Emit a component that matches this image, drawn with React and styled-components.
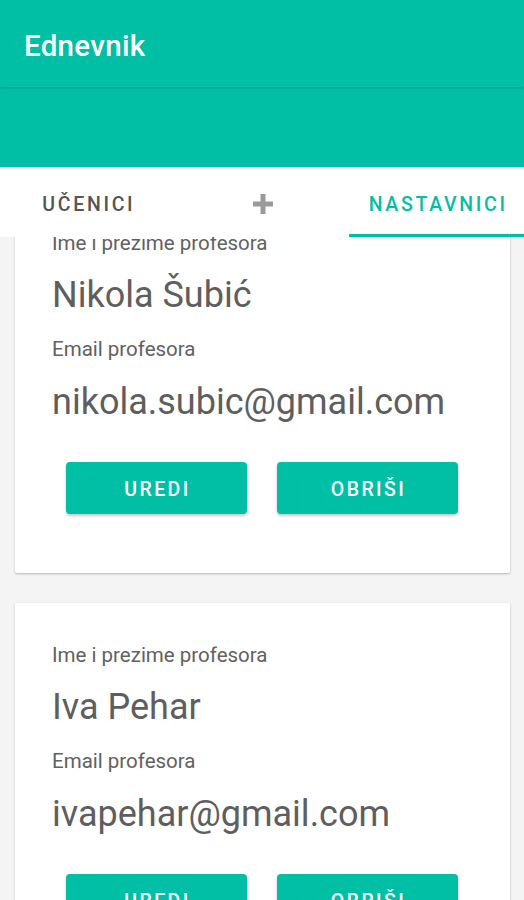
import React from "react";
import styled, { createGlobalStyle } from "styled-components";

const GlobalStyle = createGlobalStyle`
  html, body {
    margin: 0;
    padding: 0;
    background: #f4f4f4;
    font-family: Roboto, "Noto Sans", sans-serif;
  }
  * { box-sizing: border-box; }
`;

const TEAL = "#00bfa5";

const Screen = styled.div`
  width: 524px;
  height: 900px;
  overflow: hidden;
  display: flex;
  flex-direction: column;
  background: #f4f4f4;
`;

const AppBar = styled.header`
  flex: none;
  background: ${TEAL};
  display: flex;
  flex-direction: column;
  position: relative;
  z-index: 2;
`;

const Toolbar = styled.div`
  height: 87px;
  display: flex;
  align-items: center;
  padding: 0 0 0 24px;
  box-shadow: 0 1px 2px rgba(0, 0, 0, 0.22);
  position: relative;
  z-index: 1;
`;

const Title = styled.h1`
  margin: 0;
  color: #ffffff;
  font-size: 29.5px;
  font-weight: 500;
  letter-spacing: 0.3px;
  line-height: 1;
  transform: translateY(3px);
`;

const Extended = styled.div`
  height: 80px;
`;

const Tabs = styled.nav`
  flex: none;
  height: 70px;
  background: #ffffff;
  display: grid;
  grid-template-columns: repeat(3, 1fr);
  position: relative;
  z-index: 2;
`;

const Tab = styled.div`
  display: flex;
  align-items: center;
  justify-content: center;
  font-size: 19.5px;
  font-weight: 500;
  letter-spacing: 2.7px;
  color: ${(p) => (p.$active ? TEAL : "#555555")};
  border-bottom: 3px solid ${(p) => (p.$active ? TEAL : "transparent")};
  padding: 7px 0 0 3px;
`;

const Content = styled.main`
  flex: 1;
  overflow: hidden;
`;

const List = styled.div`
  display: flex;
  flex-direction: column;
  gap: 30px;
  padding: 0 14px 0 15px;
  margin-top: -46px;
`;

const Card = styled.section`
  background: #ffffff;
  height: 382px;
  border-radius: 2px;
  box-shadow: 0 1px 3px rgba(0, 0, 0, 0.18), 0 1px 1px rgba(0, 0, 0, 0.08);
  padding: 40px 37px 0 37px;
  display: flex;
  flex-direction: column;
`;

const Label = styled.div`
  font-size: 20.5px;
  color: #616161;
  line-height: 24px;
`;

const Value = styled.div`
  font-size: 36px;
  color: #5e5e5e;
  line-height: 42px;
  margin: ${(p) => p.$m};
`;

const Actions = styled.div`
  display: flex;
  gap: 30px;
  padding: 0 14px;
  margin-top: 39px;
`;

const Button = styled.button`
  width: 181px;
  height: 52px;
  border: none;
  border-radius: 4px;
  background: ${TEAL};
  color: #ffffff;
  font-family: Roboto, "Noto Sans", sans-serif;
  font-size: 19.5px;
  font-weight: 500;
  letter-spacing: 2.4px;
  box-shadow: 0 2px 3px rgba(0, 0, 0, 0.22);
  padding: 2px 0 0 2px;
`;

const PlusIcon = () => (
  <svg width="20" height="20" viewBox="0 0 20 20">
    <rect x="7.5" y="0" width="5" height="20" fill="#9a9a9a" />
    <rect x="0" y="7.5" width="20" height="5" fill="#9a9a9a" />
  </svg>
);

const teachers = [
  { name: "Nikola Šubić", email: "nikola.subic@gmail.com" },
  { name: "Iva Pehar", email: "ivapehar@gmail.com" },
];

export default function App() {
  return (
    <>
      <GlobalStyle />
      <Screen>
        <AppBar>
          <Toolbar>
            <Title>Ednevnik</Title>
          </Toolbar>
          <Extended />
        </AppBar>
        <Tabs>
          <Tab>UČENICI</Tab>
          <Tab>
            <PlusIcon />
          </Tab>
          <Tab $active>NASTAVNICI</Tab>
        </Tabs>
        <Content>
          <List>
            {teachers.map((t) => (
              <Card key={t.email}>
                <Label>Ime i prezime profesora</Label>
                <Value $m="19px 0 21px">{t.name}</Value>
                <Label>Email profesora</Label>
                <Value $m="20px 0 0">{t.email}</Value>
                <Actions>
                  <Button>UREDI</Button>
                  <Button>OBRIŠI</Button>
                </Actions>
              </Card>
            ))}
          </List>
        </Content>
      </Screen>
    </>
  );
}
